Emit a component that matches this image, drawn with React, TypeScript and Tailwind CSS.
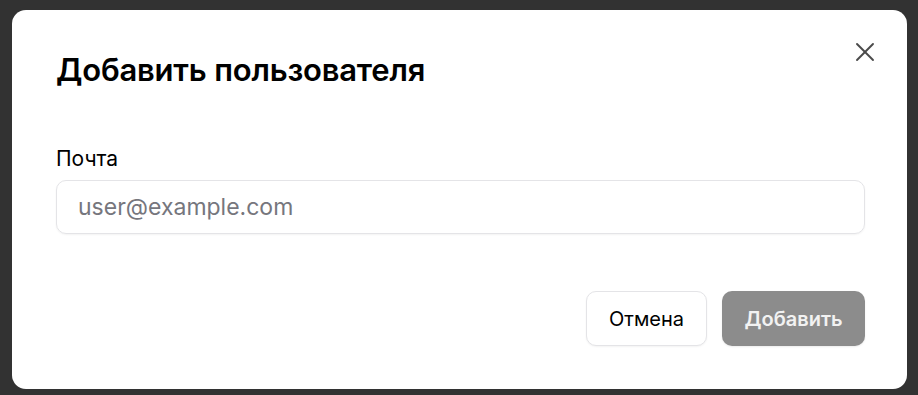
import { X } from "lucide-react";

export default function App() {
    return (
        <main
            className="h-[395px] w-[918px] bg-[#323232] pt-[10px] pl-[12px]"
            style={{ fontFamily: "Inter, 'Noto Sans', sans-serif" }}
        >
            {/* Dialog */}
            <div className="relative flex h-[379px] w-[895px] flex-col rounded-[14px] bg-white pl-[44px] pr-[42px]">
                <button className="absolute right-[26px] top-[26px] text-[#4a4a4a]">
                    <X size={32} strokeWidth={1.4} />
                </button>

                <h2 className="mt-[41px] text-[31px] font-semibold leading-[38px] tracking-[-0.2px] text-black">
                    Добавить пользователя
                </h2>

                <label className="mt-[56px] text-[21px] leading-[28px] text-black">Почта</label>

                <input
                    className="mt-[7px] h-[54px] w-full rounded-[10px] border border-[#e4e4e7] px-[21px] text-[23px] text-black shadow-[0_1px_2px_rgba(0,0,0,0.05)] outline-none placeholder:text-[#76767d]"
                    placeholder="user@example.com"
                />

                <div className="mt-[57px] flex justify-end gap-[15px]">
                    <button className="h-[55px] w-[121px] rounded-[10px] border border-[#e4e4e7] bg-white text-[20px] text-black shadow-[0_1px_2px_rgba(0,0,0,0.05)]">
                        Отмена
                    </button>
                    <button className="h-[55px] w-[143px] rounded-[10px] bg-[#8c8c8c] text-[20px] font-semibold text-[#f2f2f2] shadow-[0_1px_2px_rgba(0,0,0,0.08)]">
                        Добавить
                    </button>
                </div>
            </div>
        </main>
    );
}
